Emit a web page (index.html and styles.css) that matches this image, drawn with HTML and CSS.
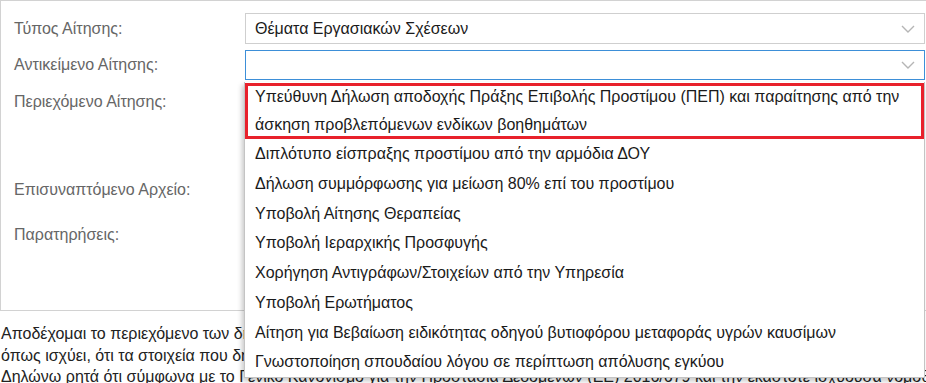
FILE: index.html
```html
<!DOCTYPE html>
<html>
<head>
  <title>Αίτηση</title>
  <meta http-equiv="content-type" content="text/html; charset=utf-8" />
  <link rel="stylesheet" href="styles.css">
</head>
<body>
  <div class="panel">
    <div class="row row-type">
      <label class="lbl">Τύπος Αίτησης:</label>
      <div class="select">
        <span>Θέματα Εργασιακών Σχέσεων</span>
        <svg class="chev" width="14" height="8" viewBox="0 0 14 8"><polyline points="1,1 7,7 13,1" fill="none" stroke="#b5b5b5" stroke-width="1.4"/></svg>
      </div>
    </div>
    <div class="row row-subject">
      <label class="lbl">Αντικείμενο Αίτησης:</label>
      <div class="select focus">
        <span></span>
        <svg class="chev" width="14" height="8" viewBox="0 0 14 8"><polyline points="1,1 7,7 13,1" fill="none" stroke="#b5b5b5" stroke-width="1.4"/></svg>
      </div>
    </div>
    <div class="row row-content">
      <label class="lbl">Περιεχόμενο Αίτησης:</label>
      <div class="box"></div>
    </div>
    <div class="row row-file">
      <label class="lbl">Επισυναπτόμενο Αρχείο:</label>
      <div class="box"></div>
    </div>
    <div class="row row-notes">
      <label class="lbl">Παρατηρήσεις:</label>
      <div class="box"></div>
    </div>

    <ul class="dropdown">
      <li class="picked">Υπεύθυνη Δήλωση αποδοχής Πράξης Επιβολής Προστίμου (ΠΕΠ) και παραίτησης από την άσκηση προβλεπόμενων ενδίκων βοηθημάτων</li>
      <li>Διπλότυπο είσπραξης προστίμου από την αρμόδια ΔΟΥ</li>
      <li>Δήλωση συμμόρφωσης για μείωση 80% επί του προστίμου</li>
      <li>Υποβολή Αίτησης Θεραπείας</li>
      <li>Υποβολή Ιεραρχικής Προσφυγής</li>
      <li>Χορήγηση Αντιγράφων/Στοιχείων από την Υπηρεσία</li>
      <li>Υποβολή Ερωτήματος</li>
      <li>Αίτηση για Βεβαίωση ειδικότητας οδηγού βυτιοφόρου μεταφοράς υγρών καυσίμων</li>
      <li>Γνωστοποίηση σπουδαίου λόγου σε περίπτωση απόλυσης εγκύου</li>
    </ul>
  </div>

  <div class="terms">
    <div>Αποδέχομαι το περιεχόμενο των δηλώσεων της παρούσας αίτησης και δηλώνω υπεύθυνα, κατά την έννοια του ν. 1599/1986</div>
    <div>όπως ισχύει, ότι τα στοιχεία που δηλώνω είναι αληθή και ακριβή.</div>
    <div>Δηλώνω ρητά ότι σύμφωνα με το Γενικό Κανονισμό για την Προστασία Δεδομένων (ΕΕ) 2016/679 και την εκάστοτε ισχύουσα νομοθεσία</div>
  </div>
</body>
</html>
```

FILE: styles.css
```css
html, body {
  margin: 0;
}
body {
  font-family: "Liberation Sans", Arial, sans-serif;
  font-size: 16px;
  color: #222;
  background: #fff;
}
.panel {
  position: relative;
  box-sizing: border-box;
  width: 926px;
  border: 1px solid #d2d2d2;
  border-right: none;
  padding: 12px 0 10px 13px;
}
.row {
  display: grid;
  grid-template-columns: 231px 680px;
}
.lbl {
  color: #666;
  line-height: 18px;
}
.row-type {
  height: 31px;
  align-items: center;
}
.row-subject {
  height: 30px;
  margin-top: 6px;
  align-items: center;
}
.row-content {
  height: 81px;
  margin-top: 7px;
}
.row-content .lbl {
  padding-top: 6px;
}
.row-file {
  height: 30px;
  margin-top: 7px;
  align-items: center;
}
.row-notes {
  height: 80px;
  margin-top: 15px;
}
.row-notes .lbl {
  padding-top: 6px;
}
.select {
  box-sizing: border-box;
  height: 100%;
  border: 1px solid #cfcfcf;
  display: flex;
  align-items: center;
  justify-content: space-between;
  padding: 0 9px 0 9px;
  color: #1a1a1a;
}
.select.focus {
  border-color: #3d8fd8;
}
.box {
  box-sizing: border-box;
  height: 100%;
  border: 1px solid #cfcfcf;
}
.dropdown {
  position: absolute;
  top: 81px;
  left: 243px;
  width: 679px;
  margin: 0;
  padding: 0;
  list-style: none;
  background: #fff;
  border: 1px solid #c4c4c4;
  border-top: none;
  box-shadow: -2px 3px 5px rgba(0, 0, 0, 0.22);
}
.dropdown li {
  padding: 0 10px;
  line-height: 29.75px;
  color: #1a1a1a;
  white-space: nowrap;
}
.dropdown li.picked {
  line-height: 28px;
  white-space: normal;
  padding-right: 12px;
  outline: 3px solid #e8212b;
  outline-offset: -3px;
  margin-top: 1px;
}
.terms {
  width: 926px;
  overflow: hidden;
  margin-top: 12px;
  padding-left: 1px;
  box-sizing: border-box;
  line-height: 21.5px;
  color: #222;
  white-space: nowrap;
}
```
